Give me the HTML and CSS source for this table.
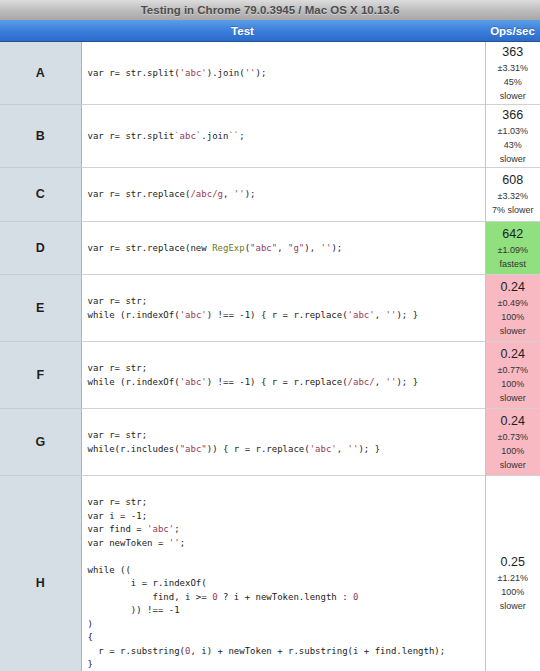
FILE: index.html
```html
<!DOCTYPE html>
<html>
<head>
<meta charset="utf-8">
<link rel="stylesheet" href="styles.css">
</head>
<body>
<div class="title">Testing in Chrome 79.0.3945 / Mac OS X 10.13.6</div>
<table class="results">
  <colgroup><col class="c-label"><col class="c-code"><col class="c-ops"></colgroup>
  <thead>
    <tr><th colspan="2" class="h-test">Test</th><th class="h-ops">Ops/sec</th></tr>
  </thead>
  <tbody>
    <tr>
      <th class="label">A</th>
      <td class="code"><pre>var r= str.split(<span class="s">'abc'</span>).join(<span class="s">''</span>);</pre></td>
      <td class="ops"><span class="num">363</span><span class="sm">±3.31%</span><span class="sm">45% slower</span></td>
    </tr>
    <tr>
      <th class="label">B</th>
      <td class="code"><pre>var r= str.split<span class="s">`abc`</span>.join<span class="s">``</span>;</pre></td>
      <td class="ops"><span class="num">366</span><span class="sm">±1.03%</span><span class="sm">43% slower</span></td>
    </tr>
    <tr>
      <th class="label">C</th>
      <td class="code"><pre>var r= str.replace(<span class="s">/abc/g</span>, <span class="s">''</span>);</pre></td>
      <td class="ops"><span class="num">608</span><span class="sm">±3.32%</span><span class="sm">7% slower</span></td>
    </tr>
    <tr>
      <th class="label">D</th>
      <td class="code"><pre>var r= str.replace(new <span class="t">RegExp</span>(<span class="s">"abc"</span>, <span class="s">"g"</span>), <span class="s">''</span>);</pre></td>
      <td class="ops fastest"><span class="num">642</span><span class="sm">±1.09%</span><span class="sm">fastest</span></td>
    </tr>
    <tr>
      <th class="label">E</th>
      <td class="code"><pre>var r= str;
while (r.indexOf(<span class="s">'abc'</span>) !== -1) { r = r.replace(<span class="s">'abc'</span>, <span class="s">''</span>); }</pre></td>
      <td class="ops slowest"><span class="num">0.24</span><span class="sm">±0.49%</span><span class="sm">100% slower</span></td>
    </tr>
    <tr>
      <th class="label">F</th>
      <td class="code"><pre>var r= str;
while (r.indexOf(<span class="s">'abc'</span>) !== -1) { r = r.replace(<span class="s">/abc/</span>, <span class="s">''</span>); }</pre></td>
      <td class="ops slowest"><span class="num">0.24</span><span class="sm">±0.77%</span><span class="sm">100% slower</span></td>
    </tr>
    <tr>
      <th class="label">G</th>
      <td class="code"><pre>var r= str;
while(r.includes(<span class="s">"abc"</span>)) { r = r.replace(<span class="s">'abc'</span>, <span class="s">''</span>); }</pre></td>
      <td class="ops slowest"><span class="num">0.24</span><span class="sm">±0.73%</span><span class="sm">100% slower</span></td>
    </tr>
    <tr>
      <th class="label">H</th>
      <td class="code"><pre>var r= str;
var i = -1;
var find = <span class="s">'abc'</span>;
var newToken = <span class="s">''</span>;

while ((
        i = r.indexOf(
            find, i &gt;= <span class="s">0</span> ? i + newToken.length : <span class="s">0</span>
        )) !== -1
)
{
  r = r.substring(<span class="s">0</span>, i) + newToken + r.substring(i + find.length);
}</pre></td>
      <td class="ops"><span class="num">0.25</span><span class="sm">±1.21%</span><span class="sm">100% slower</span></td>
    </tr>
  </tbody>
</table>
</body>
</html>
```
FILE: styles.css
```css
html, body {
  margin: 0;
  padding: 0;
  background: #ffffff;
}
body {
  font-family: "Liberation Sans", Arial, sans-serif;
  color: #222;
  width: 540px;
  overflow: hidden;
}
.title {
  height: 20px;
  line-height: 20px;
  text-align: center;
  font-weight: bold;
  font-size: 11.5px;
  color: #4e4e4e;
  text-shadow: 0 1px 0 rgba(255,255,255,0.4);
  background: linear-gradient(#dcdcdc, #b9b9b9 60%, #a7a7a7);
}
.results {
  width: 540px;
  border-collapse: collapse;
  table-layout: fixed;
}
.c-label { width: 81px; }
.c-ops { width: 55px; }
.results thead th {
  height: 21px;
  padding: 0;
  color: #fff;
  font-size: 11.5px;
  font-weight: bold;
  text-align: center;
  background: linear-gradient(#5d9de6, #3b7fdc 50%, #2c6bc9);
  border-bottom: 1px solid #24518f;
  text-shadow: 0 -1px 0 rgba(0,0,0,0.2);
}
.results .h-ops {
  text-align: center;
}
.results tbody tr {
  border-bottom: 1px solid #d2d2d2;
}
.label {
  background: #d6dee5;
  font-size: 12.5px;
  font-weight: bold;
  color: #1e1e1e;
  text-align: center;
  border-right: 1px solid #b3b3b3;
  border-bottom: 1px solid #c4cbd1;
  padding: 0;
}
.code {
  padding: 20px 6px 19px 6px;
  vertical-align: middle;
  border-right: 1px solid #c6c6c6;
}
.code pre {
  margin: 0;
  font-family: "DejaVu Sans Mono", monospace;
  font-size: 9px;
  line-height: 13.5px;
  color: #222;
  white-space: pre;
}
.code .s { color: #983a58; }
.code .t { color: #6b7a16; }
.ops {
  padding: 2px 5px 1px;
  text-align: center;
  vertical-align: middle;
}
.ops .num {
  display: block;
  font-size: 12.5px;
  line-height: 17px;
  color: #1e1e1e;
}
.ops .sm {
  display: block;
  font-size: 9px;
  line-height: 14px;
  color: #333;
}
.ops.fastest { background: #90e07f; }
.ops.slowest { background: #f8b9c2; }
```
